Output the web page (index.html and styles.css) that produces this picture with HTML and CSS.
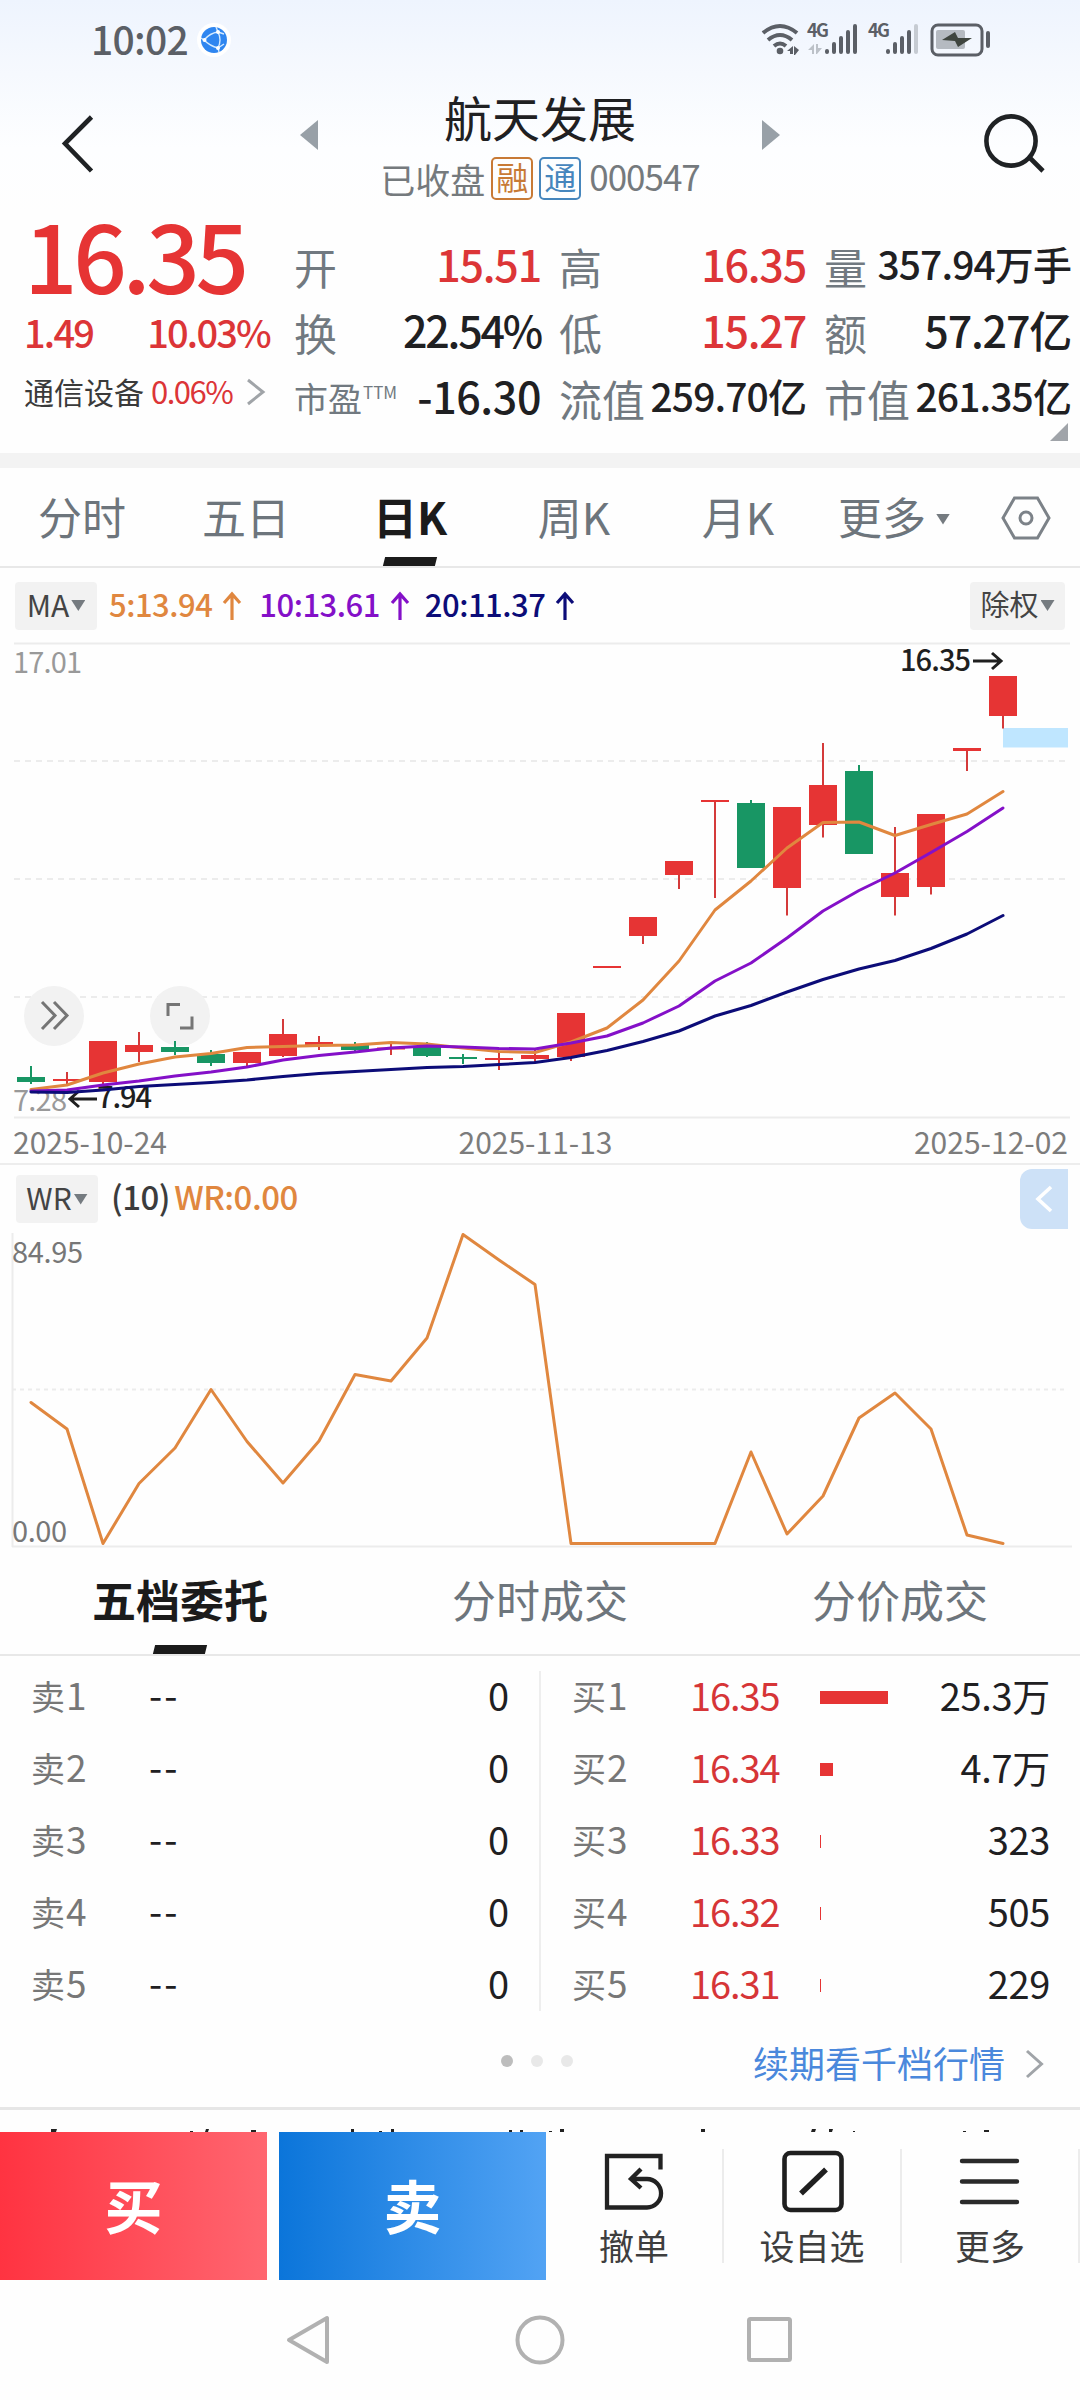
FILE: index.html
```html
<!DOCTYPE html>
<html lang="zh-CN">
<head>
<meta charset="utf-8">
<title>航天发展 000547</title>
<link rel="stylesheet" href="styles.css">
</head>
<body>
<header class="top">
  <div class="status">
    <span class="t clock">10:02</span>
    <svg class="globe" width="36" height="36" viewBox="0 0 36 36"><circle cx="18" cy="18" r="17" fill="#fff"/><circle cx="18" cy="18" r="13" fill="#2f86f0"/><g stroke="#d5ebff" stroke-width="1.4" fill="none"><path d="M8 18Q14 11 22 10M8 18Q14 24 22 26M22 10Q26 18 22 26M22 10L20 5M22 10L28 12M22 26L28 22M22 26L23 30M8 18L5 16"/></g><g fill="#fff"><circle cx="8.500" cy="18" r="2"/><circle cx="22" cy="10" r="2"/><circle cx="22" cy="26" r="2"/></g></svg>
    <svg class="signals" width="232" height="40" viewBox="760 20 232 40">
      <g fill="none" stroke="#5b5f66" stroke-width="4">
        <path d="M762 33Q779 19 796 33M767 40Q779 30 791 40M773 46Q779 41 785 46"/>
      </g>
      <circle cx="779" cy="51" r="3.300" fill="#5b5f66"/>
      <path d="M786 51L792 46V54H789V51ZM793 46L798 50L794 55H793Z" fill="#5b5f66"/>
      <path d="M807 50L813 44V54H811V50ZM815 44H817V48H821L816 54H815Z" fill="#bcc1c8"/>
      <text class="net" x="806" y="37">4G</text><text class="net" x="867" y="37">4G</text>
      <g fill="none" stroke="#5b5f66" stroke-width="4" stroke-linecap="round">
        <path d="M826 51V52M833 44V52M840 38V52M847 32V52M854 26V52M887 51V52M894 44V52M901 38V52M908 32V52"/><path d="M915 26V52" stroke="#c6cbd2"/>
      </g>
      <rect x="931" y="25" width="50" height="30" rx="6" fill="none" stroke="#5b5f66" stroke-width="3"/>
      <rect x="935" y="30" width="29" height="19" rx="2" fill="#b5bac1"/>
      <path d="M941 40L954 32L957 38H971L957 47L954 41Z" fill="#3f453f"/>
      <path d="M987 33V46" stroke="#5b5f66" stroke-width="4" stroke-linecap="round"/>
    </svg>
  </div>
  <div class="titlebar">
    <svg width="36" height="64" viewBox="60 112 36 64"><path d="M91.500 117L65 143.500L91.500 171" fill="none" stroke="#1f2224" stroke-width="4.600"/></svg>
    <svg class="prev" width="18" height="30" viewBox="0 0 18 30"><path d="M18 0V30L0 15Z" fill="#98a0a7"/></svg>
    <div class="title">
      <div class="t name">航天发展</div>
      <div class="sub"><span class="t state">已收盘</span><span class="badge rong"><span class="t">融</span></span><span class="badge tong"><span class="t">通</span></span><span class="t code">000547</span></div>
    </div>
    <svg class="next" width="18" height="30" viewBox="0 0 18 30"><path d="M0 0V30L18 15Z" fill="#98a0a7"/></svg>
    <svg class="search" width="64" height="64" viewBox="982 112 64 64"><g fill="none" stroke="#1f2224" stroke-width="4.600"><circle cx="1011" cy="141" r="24.600"/><path d="M1029 157L1043 171"/></g></svg>
  </div>
</header>

<section class="quote">
  <div class="last">
    <div class="t price">16.35</div>
    <div class="change"><span class="t">1.49</span><span class="t">10.03%</span></div>
    <div class="sector"><span class="t">通信设备</span><span class="t pct">0.06%</span><svg width="20" height="28" viewBox="0 0 20 28"><path d="M2 2L17 14L2 26" fill="none" stroke="#a0a4a8" stroke-width="3"/></svg></div>
  </div>
  <div class="grid">
    <div><span class="t k">开</span><span class="t v red">15.51</span></div>
    <div><span class="t k">高</span><span class="t v red">16.35</span></div>
    <div><span class="t k">量</span><span class="t v s">357.94万手</span></div>
    <div><span class="t k">换</span><span class="t v rate">22.54%</span></div>
    <div><span class="t k">低</span><span class="t v red">15.27</span></div>
    <div><span class="t k">额</span><span class="t v">57.27亿</span></div>
    <div><span class="t k pe">市盈<sup>TTM</sup></span><span class="t v neg">-16.30</span></div>
    <div><span class="t k">流值</span><span class="t v s">259.70亿</span></div>
    <div><span class="t k">市值</span><span class="t v s">261.35亿</span></div>
  </div>
  <svg class="corner" width="18" height="18" viewBox="0 0 18 18"><path d="M18 0V18H0Z" fill="#a0a4a9"/></svg>
</section>

<nav class="tabs">
  <div class="tab"><span class="t">分时</span></div>
  <div class="tab"><span class="t">五日</span></div>
  <div class="tab on"><span class="t">日K</span></div>
  <div class="tab"><span class="t">周K</span></div>
  <div class="tab"><span class="t">月K</span></div>
  <div class="tab more"><span class="t">更多</span><i class="caret"></i></div>
  <svg class="hex" width="50" height="44" viewBox="0 0 50 44"><g fill="none" stroke="#7c8288" stroke-width="3"><path d="M13.500 2H36.500L48 22L36.500 42H13.500L2 22Z"/><circle cx="25" cy="22" r="6"/></g></svg>
</nav>

<section class="ma">
  <div class="btn"><span class="t">MA</span><i class="caret"></i></div>
  <span class="t m m5">5:13.94</span><svg class="up m5" width="20" height="28" viewBox="0 0 20 28"><path d="M10 28V2M2 11L10 2L18 11"/></svg>
  <span class="t m m10">10:13.61</span><svg class="up m10" width="20" height="28" viewBox="0 0 20 28"><path d="M10 28V2M2 11L10 2L18 11"/></svg>
  <span class="t m m20">20:11.37</span><svg class="up m20" width="20" height="28" viewBox="0 0 20 28"><path d="M10 28V2M2 11L10 2L18 11"/></svg>
  <div class="btn right"><span class="t">除权</span><i class="caret"></i></div>
</section>

<svg class="kline" width="1080" height="475" viewBox="0 643 1080 475">
  <g class="rule"><path d="M14 643.500H1070M14 1117.500H1070"/><path class="dash" d="M14 761H1068M14 879H1068M14 997H1068"/></g>
  <text class="axis" x="13" y="673" textLength="69">17.01</text>
  <text class="axis" x="13" y="1111" textLength="54">7.28</text>
  <g class="button"><circle cx="54" cy="1016" r="30"/><path d="M42 1002L55 1015.500L42 1029M54 1002L67 1015.500L54 1029"/><circle cx="180" cy="1016" r="30"/><path d="M168 1016V1004.500H180M180 1028H192V1016.500"/></g>
  <rect x="1003" y="728" width="65" height="19.500" fill="#bfe6ff"/>
  <g class="down">
    <path d="M31 1066V1084M175 1041V1055M211 1050V1066M355 1042V1051M427 1042V1057M463 1054V1064M751 800V868M859 765V854"/>
    <path class="body" d="M17 1077h28v5h-28zM161 1047h28v5h-28zM197 1054h28v9h-28zM341 1044h28v6h-28zM413 1047h28v9h-28zM449 1057h28v2h-28zM737 803h28v65h-28zM845 771h28v83h-28z"/>
  </g>
  <g class="rise">
    <path d="M67 1072V1084M103 1041V1084M139 1032V1062M247 1052V1066M283 1019V1057M319 1036V1050M391 1042V1055M499 1051V1070M535 1050V1063M571 1013V1061M643 917V944M679 861V889M715 801V898M787 807V915.500M823 743V837.500M895 827V915.500M931 814V894.500M967 748V771M1003 676V728.500"/>
    <path class="body" d="M53 1079h28v2h-28zM89 1041h28v41h-28zM125 1045h28v7h-28zM233 1052h28v11h-28zM269 1034h28v22h-28zM305 1042h28v3h-28zM377 1047.500h28v2h-28zM485 1058h28v2h-28zM521 1055h28v4h-28zM557 1013h28v44h-28zM593 966h28v2h-28zM629 917h28v19h-28zM665 861h28v14h-28zM701 800h28v2h-28zM773 807h28v81h-28zM809 785h28v40h-28zM881 873h28v24h-28zM917 814h28v73h-28zM953 748h28v3h-28zM989 676h28v40h-28z"/>
  </g>
  <text class="mark" x="900" y="671" textLength="71">16.35</text>
  <text class="mark" x="97" y="1108" textLength="55">7.94</text>
  <path class="arrow" d="M973 661H1001M992 653L1001 661L992 669M97 1099H70M79 1091L70 1099L79 1107"/>
  <g class="lines">
    <polyline stroke="#e0873f" points="31,1089.500 67,1085 103,1073 139,1064 175,1057 211,1053.500 247,1047.500 283,1046.500 319,1045.500 355,1045 391,1042.500 427,1044 463,1048 499,1051.500 535,1052.500 571,1042 607,1028 643,1000 679,961 715,910 751,881 787,848 823,822.500 859,822 895,835.500 931,824.500 967,814 1003,791.500"/>
    <polyline stroke="#8410c8" points="31,1091 67,1090 103,1085 139,1081 175,1076 211,1072 247,1067 283,1060 319,1055.500 355,1052 391,1048 427,1046 463,1047 499,1048.500 535,1049 571,1043 607,1036 643,1023 679,1006 715,981 751,963 787,938 823,911 859,890.500 895,873 931,852.500 967,831.500 1003,808"/>
    <polyline stroke="#0c0c78" points="31,1092 67,1092.500 103,1090 139,1086.500 175,1084.500 211,1082.500 247,1080 283,1076.500 319,1073.500 355,1071.500 391,1069.500 427,1067.500 463,1066.500 499,1064.500 535,1062.500 571,1057.500 607,1050.500 643,1041.500 679,1031 715,1016 751,1005.500 787,992 823,979.500 859,969 895,960.500 931,948.500 967,934 1003,915.500"/>
  </g>
</svg>

<div class="dates"><span class="t">2025-10-24</span><span class="t mid-date">2025-11-13</span><span class="t">2025-12-02</span></div>

<section class="wr">
  <div class="btn"><span class="t">WR</span><i class="caret"></i></div>
  <span class="t m param">(10)</span><span class="t m m5">WR:0.00</span>
  <div class="drawer"><svg width="18" height="28" viewBox="0 0 18 28"><path d="M16 2L3 14L16 26" fill="none" stroke="#fff" stroke-width="3.600"/></svg></div>
</section>

<svg class="wrchart" width="1080" height="314" viewBox="0 1233 1080 314">
  <g class="rule"><path d="M12.500 1233V1547M12 1546.500H1072"/><path class="dash mid" d="M12 1389.500H1068"/></g>
  <text class="axis dark" x="12" y="1263" textLength="71">84.95</text>
  <text class="axis dark" x="12" y="1542" textLength="55">0.00</text>
  <g class="lines"><polyline stroke="#e0873f" points="31,1402.500 67,1429 103,1543.500 139,1483.500 175,1448 211,1389.500 247,1441.500 283,1483 319,1441 355,1374.500 391,1381 427,1338 463,1234.500 499,1260 535,1284.500 571,1543.500 715,1543.500 751,1452 787,1534 823,1496 859,1418 895,1393 931,1429 967,1535 1003,1543.500"/></g>
</svg>

<nav class="tabs book-tabs">
  <div class="tab on"><span class="t">五档委托</span></div>
  <div class="tab"><span class="t">分时成交</span></div>
  <div class="tab"><span class="t">分价成交</span></div>
</nav>

<section class="book">
  <div class="side sell">
    <div class="row"><span class="t lv">卖<b>1</b></span><span class="t no">--</span><span class="t q">0</span></div>
    <div class="row"><span class="t lv">卖<b>2</b></span><span class="t no">--</span><span class="t q">0</span></div>
    <div class="row"><span class="t lv">卖<b>3</b></span><span class="t no">--</span><span class="t q">0</span></div>
    <div class="row"><span class="t lv">卖<b>4</b></span><span class="t no">--</span><span class="t q">0</span></div>
    <div class="row"><span class="t lv">卖<b>5</b></span><span class="t no">--</span><span class="t q">0</span></div>
  </div>
  <div class="split"></div>
  <div class="side buy">
    <div class="row"><span class="t lv">买<b>1</b></span><span class="t p">16.35</span><i class="bar" style="width:68px"></i><span class="t q">25.3万</span></div>
    <div class="row"><span class="t lv">买<b>2</b></span><span class="t p">16.34</span><i class="bar" style="width:13px"></i><span class="t q">4.7万</span></div>
    <div class="row"><span class="t lv">买<b>3</b></span><span class="t p">16.33</span><i class="bar" style="width:1px"></i><span class="t q">323</span></div>
    <div class="row"><span class="t lv">买<b>4</b></span><span class="t p">16.32</span><i class="bar" style="width:1px"></i><span class="t q">505</span></div>
    <div class="row"><span class="t lv">买<b>5</b></span><span class="t p">16.31</span><i class="bar" style="width:1px"></i><span class="t q">229</span></div>
  </div>
</section>

<section class="pager">
  <div class="dots"><i class="cur"></i><i></i><i></i></div>
  <div class="link"><span class="t">续期看千档行情</span><svg width="20" height="30" viewBox="0 0 20 30"><path d="M2 2L16.500 15L2 28" fill="none" stroke="#a0a4a8" stroke-width="3"/></svg></div>
</section>

<div class="peek"><svg width="1080" height="3" viewBox="0 0 1080 3"><path fill="#222" d="M51 0h6l-1 3h-5zM190 2h3v1h-3zM206 0h3l-1 3h-3zM251 1h5v2h-5zM351 0h3v3h-3zM379 2h3v1h-3zM391 0h3v3h-3zM509 1h3v2h-3zM520 1h3v2h-3zM549 2h3v1h-3zM560 0h4v3h-4zM701 0h4v3h-4zM812 0h4l-1 3h-4zM829 0h4l-1 3h-3zM853 2h2v1h-2zM963 2h3v1h-3zM984 1h5v2h-5z"/></svg></div>

<footer class="actions">
  <div class="deal buybtn"><span class="t">买</span></div>
  <div class="deal sellbtn"><span class="t">卖</span></div>
  <div class="act a1">
    <svg width="64" height="64" viewBox="605 2149 64 64"><g fill="none" stroke="#222" stroke-width="4.300"><path d="M663.500 2169.500V2156H610V2207.500H650A14 14.200 0 0 0 650 2179H635"/><path d="M644 2169L634 2179L644 2188"/></g></svg>
    <span class="t">撤单</span>
  </div>
  <div class="act a2">
    <svg width="64" height="64" viewBox="780 2149 64 64"><rect x="784.500" y="2153" width="57" height="57" rx="6" fill="none" stroke="#1f1f1f" stroke-width="4.600"/><path d="M801 2193.500L826 2169.500" stroke="#1f1f1f" stroke-width="5.500"/></svg>
    <span class="t">设自选</span>
  </div>
  <div class="act a3">
    <svg width="64" height="64" viewBox="959 2149 64 64"><path d="M963 2161H1018M963 2181.500H1018M963 2202H1018" stroke="#2a2a2a" stroke-width="4.400" stroke-linecap="round"/></svg>
    <span class="t">更多</span>
  </div>
</footer>

<nav class="sysnav">
  <svg width="60" height="60" viewBox="281 2310 60 60"><path d="M328 2318V2362L290 2340Z"/></svg>
  <svg width="60" height="60" viewBox="510 2310 60 60"><circle cx="540" cy="2340" r="22.500"/></svg>
  <svg width="60" height="60" viewBox="740 2310 60 60"><rect x="749" y="2319" width="41" height="41" rx="1.500"/></svg>
</nav>
</body>
</html>
```
FILE: styles.css
```css
* { box-sizing: border-box; }
body { margin: 0; width: 1080px; height: 2400px; overflow: hidden; background: #fefefe; color: #1f2022; font-family: "Noto Sans CJK SC", sans-serif; }
svg { display: block; flex: none; overflow: visible; }
i, b { font-style: normal; font-weight: inherit; }
.t { display: block; line-height: 1; padding-bottom: .13em; white-space: nowrap; }
.red { color: #dc3537; }

.top { height: 212px; background: linear-gradient(#eef4fe, #f6f9fe 35%, #fdfeff 70%, #fefefe); }
.status { display: flex; align-items: center; height: 80px; padding-left: 91px; }
.clock { width: 105px; font-size: 39px; font-weight: 500; letter-spacing: -.700px; padding-bottom: 3px; color: #5b5f66; }
.signals { margin-left: 529px; }
.net { font-size: 18px; font-weight: 700; fill: #5b5f66; letter-spacing: -1.500px; }
.titlebar { display: flex; height: 132px; padding-left: 60px; }
.titlebar > svg { margin-top: 32px; }
.titlebar .prev { margin: 40px 0 0 204px; }
.title { width: 444px; display: flex; flex-direction: column; align-items: center; padding-top: 12px; }
.name { font-size: 48px; }
.sub { display: flex; align-items: center; margin-top: 11px; height: 42px; }
.state, .code { color: #757a7d; font-size: 35px; }
.state { margin-right: 6px; padding-bottom: 0; }
.code { margin-left: 8px; letter-spacing: -1px; }
.badge { width: 42px; height: 43px; border: 2px solid; border-radius: 5px; display: grid; place-items: center; font-size: 32px; }
.rong { color: #c87a35; margin-right: 6px; }
.tong { color: #4686bd; }
.titlebar .next { margin-top: 40px; }
.titlebar .search { margin-left: 202px; }

.quote { position: relative; display: flex; height: 256px; border-bottom: 15px solid #f3f3f3; }
.last { width: 295px; padding-left: 24px; color: #dc3537; }
.price { height: 94px; margin-top: -6px; padding: 0; font-size: 94px; font-weight: 500; letter-spacing: -4.300px; color: #e63434; }
.change { display: flex; justify-content: space-between; width: 246px; margin-top: 13px; font-size: 38px; font-weight: 500; letter-spacing: -1.800px; }
.sector { display: flex; align-items: center; margin-top: 19px; font-size: 30px; color: #3a3a3a; }
.pct { margin: 0 14px 0 7px; letter-spacing: -1.500px; color: #dc3537; font-size: 31px; }
.grid { display: grid; grid-template-columns: repeat(3, 245px); grid-auto-rows: 66px; column-gap: 20px; padding-top: 22px; }
.grid > div { display: flex; align-items: center; justify-content: space-between; }
.k { font-size: 43px; color: #717980; padding-bottom: .03em; margin-left: -1px; }
.pe { font-size: 34px; }
.pe sup { font-size: 17px; line-height: 0; margin-left: 1px; vertical-align: 13px; }
.v { font-size: 43px; font-weight: 500; padding-bottom: 8px; letter-spacing: -1.200px; margin-right: -1px; }
.v.s { font-size: 39px; letter-spacing: -.900px; padding-bottom: 7px; }
.v.rate { letter-spacing: -2.200px; }
.v.neg { letter-spacing: -.400px; }
.corner { position: absolute; right: 12px; top: 211px; }

.tabs { display: flex; height: 100px; border-bottom: 2px solid #e8e8e8; font-size: 44px; color: #6d757c; }
.tab { position: relative; width: 164px; display: flex; justify-content: center; align-items: center; gap: 10px; padding-top: 4px; }
.tab.on { color: #1b1b1b; font-weight: 700; }
.tab.on::after { content: ""; position: absolute; left: calc(50% - 26px); bottom: 0; width: 52px; height: 9px; background: #1b1b1b; transform: skewX(-14deg); }
.more { margin-left: -8px; }
.hex { margin: 28px 0 0 25px; }
.caret { width: 14px; height: 11px; background: #757b80; clip-path: polygon(0 0, 100% 0, 50% 100%); }

.ma, .wr { display: flex; align-items: center; }
.ma { height: 75px; padding: 0 15px; }
.btn { display: flex; align-items: center; justify-content: center; gap: 2px; width: 82px; height: 48px; border-radius: 4px; background: #f2f2f2; font-size: 30px; color: #444; }
.right { width: 95px; margin-left: auto; font-size: 29px; }
.m { font-size: 31px; font-weight: 500; letter-spacing: -.500px; }
.up { margin: 0 17px 0 10px; fill: none; stroke: currentColor; stroke-width: 3.200; }
.m10 + .up, .up.m10 { margin-right: 15px; }
.m5 { color: #e0873f; }
.m10 { color: #8410c8; }
.m20 { color: #0c0c78; }
.ma .btn + .m { margin-left: 12px; }

.rule { fill: none; stroke: #ececec; stroke-width: 2; }
.dash { stroke-dasharray: 6 5; }
.dash.mid { stroke-dasharray: 4 4; }
.axis { font-size: 29px; fill: #999; }
.axis.dark { fill: #777; }
.mark { font-size: 29px; font-weight: 500; fill: #1f1f1f; }
.arrow { fill: none; stroke: #1f1f1f; stroke-width: 3; }
.button circle { fill: #f2f2f2; }
.button path { fill: none; stroke: #757575; stroke-width: 3; }
.down { stroke: #189664; stroke-width: 2; fill: #189664; }
.rise { stroke: #d43a3a; stroke-width: 2; fill: #e63434; }
.down .body, .rise .body { stroke: none; }
.lines { fill: none; stroke-width: 3; stroke-linejoin: round; stroke-linecap: round; }
.dates { display: flex; justify-content: space-between; align-items: center; height: 47px; padding: 5px 12px 0 13px; border-bottom: 2px solid #ededed; font-size: 30px; color: #7c7c7c; }
.mid-date { margin-right: 10px; }
.wr { height: 68px; padding: 0 12px 0 16px; }
.wr .m { font-size: 33px; letter-spacing: -.500px; }
.wr .param { margin-left: 13px; margin-right: 4px; color: #3c3c3c; }
.drawer { width: 48px; height: 60px; margin-left: auto; border-radius: 12px 0 0 12px; background: #cde1f7; display: grid; place-items: center; }

.book-tabs { height: 109px; }
.book-tabs .tab { width: 360px; padding-top: 3px; }
.book { display: flex; padding: 5px 0 4px; height: 369px; }
.side { width: 539px; }
.split { width: 2px; height: 340px; margin-top: 10px; background: #eee; }
.sell { padding-left: 31px; }
.buy { padding-left: 31px; }
.row { display: flex; align-items: center; height: 72px; font-size: 38px; }
.lv { width: 118px; font-size: 34px; color: #777; }
.lv b { font-size: 37px; margin-left: 1px; }
.no { letter-spacing: 2px; padding-bottom: 7px; }
.q { margin-left: auto; }
.sell .q { margin-right: 30px; }
.buy .q { margin-right: 30px; letter-spacing: -.300px; }
.p { width: 130px; letter-spacing: -1.100px; color: #d63537; }
.bar { height: 13px; background: #e63434; }

.pager { display: grid; grid-template-columns: 1fr 1fr; height: 85px; border-bottom: 3px solid #e6e6e6; }
.dots { display: flex; gap: 18px; padding: 30px 0 0 501px; }
.dots i { width: 12px; height: 12px; flex: none; border-radius: 50%; background: #e8e8e8; }
.dots .cur { background: #bdbdbd; }
.link { display: flex; align-items: center; justify-content: flex-end; gap: 20px; padding: 0 35px 4px 0; font-size: 36px; color: #4a88dc; }

.peek { height: 22px; padding-top: 19px; }
.actions { display: flex; height: 148px; }
.deal { width: 267px; display: grid; place-items: center; padding-top: 4px; color: #fff; font-size: 58px; font-weight: 700; margin-right: 12px; }
.buybtn { background: linear-gradient(90deg, #ff3341, #ff6670); }
.sellbtn { background: linear-gradient(90deg, #0b75da, #52a3f4); margin-right: 0; }
.act { display: flex; flex-direction: column; align-items: center; gap: 14px; margin: 17px 0 17px; font-size: 35px; color: #3e3e3e; border-right: 2px solid #ececec; }
.a1 { width: 178px; }
.a2 { width: 178px; }
.a3 { flex: 1; }

.sysnav { display: flex; gap: 170px; height: 120px; padding: 30px 0 0 280px; }
.sysnav svg { fill: none; stroke: #b1b1b1; stroke-width: 4; stroke-linejoin: round; }
```
